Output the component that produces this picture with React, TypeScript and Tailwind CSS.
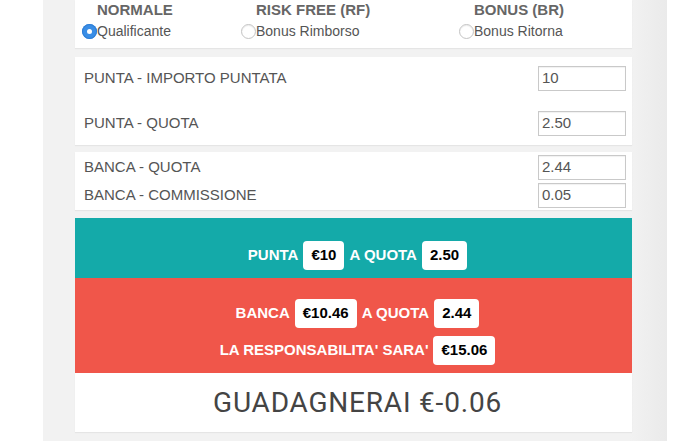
import React from "react";

const Radio = ({ checked }: { checked?: boolean }) =>
  checked ? (
    <span className="w-[15px] h-[15px] rounded-full bg-[#3a8ee6] flex items-center justify-center shrink-0 shadow-[inset_0_0_0_1px_#2f7fd6]">
      <span className="w-[5px] h-[5px] rounded-full bg-white" />
    </span>
  ) : (
    <span className="w-[15px] h-[15px] rounded-full bg-white border border-[#c4c4c4] shrink-0 shadow-[inset_0_1px_1px_rgba(0,0,0,0.08)]" />
  );

const Input = ({ value }: { value: string }) => (
  <div className="w-[88px] h-[25px] border border-[#c9c9c9] bg-white flex items-center pl-[3px] text-[15px] text-[#555] shadow-[inset_0_1px_1px_rgba(0,0,0,0.06)]">
    {value}
  </div>
);

const Box = ({ children }: { children: React.ReactNode }) => (
  <span className="h-[29px] px-[8px] bg-white rounded-[4px] text-black font-bold text-[15px] flex items-center">
    {children}
  </span>
);

export default function App() {
  return (
    <div
      className="w-[700px] h-[441px] overflow-hidden bg-white flex"
      style={{ fontFamily: '"Liberation Sans", Arial, sans-serif' }}
    >
      <div className="ml-[43px] w-[624px] h-full bg-[linear-gradient(to_right,#f2f2f2_0%,#f2f2f2_94%,#eaeaea_100%)] pl-[32px] pr-[35px] flex flex-col">
        {/* Type selector */}
        <div className="bg-white h-[48px] shrink-0 pl-[7px] pt-[1px] flex shadow-[0_1px_1px_rgba(0,0,0,0.05)]">
          {[
            { h: "NORMALE", l: "Qualificante", c: true, w: "w-[159px]" },
            { h: "RISK FREE (RF)", l: "Bonus Rimborso", c: false, w: "w-[218px]" },
            { h: "BONUS (BR)", l: "Bonus Ritorna", c: false, w: "w-[120px]" },
          ].map((col) => (
            <div key={col.h} className={`${col.w} flex flex-col`}>
              <div className="pl-[15px] text-[15px] leading-[18px] font-bold text-[#666]">{col.h}</div>
              <div className="flex items-center mt-[3px]">
                <Radio checked={col.c} />
                <span className="text-[14px] leading-[18px] text-[#555]">{col.l}</span>
              </div>
            </div>
          ))}
        </div>

        {/* Punta */}
        <div className="mt-[9px] shrink-0 bg-white pl-[9px] pr-[6px] py-[9px] flex flex-col gap-[20px] shadow-[0_1px_1px_rgba(0,0,0,0.05)]">
          <div className="flex items-center justify-between">
            <span className="text-[15px] text-[#555]">PUNTA - IMPORTO PUNTATA</span>
            <Input value="10" />
          </div>
          <div className="flex items-center justify-between">
            <span className="text-[15px] text-[#555]">PUNTA - QUOTA</span>
            <Input value="2.50" />
          </div>
        </div>

        {/* Banca */}
        <div className="mt-[7px] shrink-0 bg-white pl-[9px] pr-[6px] pt-[3px] pb-[2px] flex flex-col gap-[3px] shadow-[0_1px_1px_rgba(0,0,0,0.05)]">
          <div className="flex items-center justify-between">
            <span className="text-[15px] text-[#555]">BANCA - QUOTA</span>
            <Input value="2.44" />
          </div>
          <div className="flex items-center justify-between">
            <span className="text-[15px] text-[#555]">BANCA - COMMISSIONE</span>
            <Input value="0.05" />
          </div>
        </div>

        {/* Teal */}
        <div className="mt-[8px] shrink-0 bg-[#14aaa9] pl-[8px] pt-[23px] pb-[8px] flex justify-center">
          <div className="flex items-center gap-[5px] text-white font-bold text-[15px]">
            <span>PUNTA</span>
            <Box>€10</Box>
            <span>A QUOTA</span>
            <Box>2.50</Box>
          </div>
        </div>

        {/* Red */}
        <div className="shrink-0 bg-[#f0564a] pl-[8px] pt-[21px] pb-[8px] flex flex-col items-center gap-[8px] text-white font-bold text-[15px]">
          <div className="flex items-center gap-[5px]">
            <span>BANCA</span>
            <Box>€10.46</Box>
            <span>A QUOTA</span>
            <Box>2.44</Box>
          </div>
          <div className="flex items-center gap-[5px]">
            <span>LA RESPONSABILITA' SARA'</span>
            <Box>€15.06</Box>
          </div>
        </div>

        {/* Result */}
        <div className="shrink-0 bg-white h-[59px] pl-[8px] flex items-center justify-center shadow-[0_1px_1px_rgba(0,0,0,0.05)]">
          <span
            className="text-[28px] tracking-[0.8px] text-[#444] font-normal"
            style={{ fontFamily: 'Roboto, "Liberation Sans", sans-serif' }}
          >
            GUADAGNERAI €-0.06
          </span>
        </div>
      </div>
    </div>
  );
}
